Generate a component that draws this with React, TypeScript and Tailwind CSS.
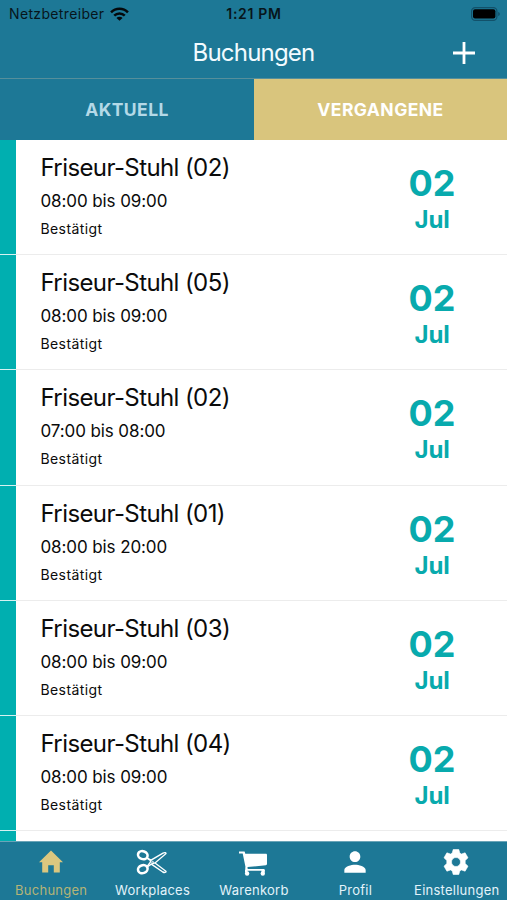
import type { ReactNode } from 'react'

type Booking = {
    id: number
    chair: string
    time: string
    status: string
    day: string
    month: string
}

const bookings: Booking[] = [
    { id: 1, chair: 'Friseur-Stuhl (02)', time: '08:00 bis 09:00', status: 'Bestätigt', day: '02', month: 'Jul' },
    { id: 2, chair: 'Friseur-Stuhl (05)', time: '08:00 bis 09:00', status: 'Bestätigt', day: '02', month: 'Jul' },
    { id: 3, chair: 'Friseur-Stuhl (02)', time: '07:00 bis 08:00', status: 'Bestätigt', day: '02', month: 'Jul' },
    { id: 4, chair: 'Friseur-Stuhl (01)', time: '08:00 bis 20:00', status: 'Bestätigt', day: '02', month: 'Jul' },
    { id: 5, chair: 'Friseur-Stuhl (03)', time: '08:00 bis 09:00', status: 'Bestätigt', day: '02', month: 'Jul' },
    { id: 6, chair: 'Friseur-Stuhl (04)', time: '08:00 bis 09:00', status: 'Bestätigt', day: '02', month: 'Jul' },
]

const WifiIcon = () => (
    <svg width="19" height="14" viewBox="0 0 18 13" fill="none" stroke="#04090c" strokeWidth="2.4">
        <path d="M1 4.900a11.300 11.300 0 0 1 16 0" />
        <path d="M4 8a7.100 7.100 0 0 1 10 0" />
        <path d="M9 13 6.100 10.300a4.100 4.100 0 0 1 5.800 0z" fill="#04090c" stroke="none" />
    </svg>
)

const BatteryIcon = () => (
    <svg width="30" height="14" viewBox="0 0 30 14">
        <rect x="0.6" y="0.6" width="25.3" height="12.8" rx="3.6" fill="none" stroke="#12516a" strokeWidth="1.2" />
        <rect x="2" y="2.2" width="22.4" height="9.4" rx="2" fill="#000" />
        <path d="M27.2 5v4c1-.3 1.6-1.1 1.6-2s-.6-1.7-1.6-2z" fill="#12516a" />
    </svg>
)

const HomeIcon = () => (
    <svg width="32" height="32" viewBox="0 0 32 32" fill="currentColor">
        <path d="M16 4.500 4 16.200h3.200v10.300h6v-7.300h5.600v7.300h6V16.200H28z" />
    </svg>
)

const ScissorsIcon = () => (
    <svg width="34" height="32" viewBox="0 0 34 32" fill="none" stroke="currentColor">
        <ellipse cx="7.800" cy="9.200" rx="4.900" ry="3.900" strokeWidth="2.600" transform="rotate(20 7.800 9.200)" />
        <ellipse cx="7.800" cy="23.200" rx="4.900" ry="3.900" strokeWidth="2.600" transform="rotate(-20 7.800 23.200)" />
        <path d="M12.200 12 16 14.200 28 7.100c1.800-.9 3.300-.4 2.900.6L20 17l-3.700 1.200-4.100 2.600" strokeWidth="1.400" />
        <path d="M12.300 12.300 15.800 14.700 15 16.700l-2.700 3.500" strokeWidth="1.400" />
        <path d="M20 17 31 25.300c.2 1.100-1.600 1.500-3.200.7L16.300 18.200" strokeWidth="1.400" />
        <circle cx="17.600" cy="16.200" r="0.900" strokeWidth="0.900" />
    </svg>
)

const CartIcon = () => (
    <svg width="32" height="32" viewBox="0 0 32 32" fill="currentColor">
        <path d="M2 5.500h5.600l.7 2.200h20.400c.9 0 1.300.4 1.300 1.200v9.100c0 .7-.4 1.100-1.100 1.200L10.500 21.100l.2 2H26.400c.9 0 1.400.4 1.400 1.100v.5H9.400L8.200 24 8.400 20.500 5.700 7.500H2z" />
        <circle cx="10.100" cy="27.500" r="2.200" />
        <circle cx="25.800" cy="27.500" r="2.200" />
        <path d="M8 24h2.500v2.500H8zM24.500 24h3.300v2.500h-3.300z" />
    </svg>
)

const ProfileIcon = () => (
    <svg width="32" height="32" viewBox="0 0 24 24" fill="currentColor">
        <path d="M12 12c2.210 0 4-1.790 4-4s-1.790-4-4-4-4 1.790-4 4 1.790 4 4 4zm0 2c-2.670 0-8 1.340-8 4v2h16v-2c0-2.660-5.330-4-8-4z" />
    </svg>
)

const GearIcon = () => (
    <svg width="32" height="32" viewBox="0 0 32 32" fill="currentColor" fillRule="evenodd">
        <path
            d="M13.200 3.500h5.600l1 3.600 1.600 1 3.700-1.300 2.900 5-2.800 2.700v3l2.800 2.700-2.900 5-3.700-1.300-1.600 1-1 3.600h-5.600l-1-3.600-1.600-1-3.700 1.300-2.900-5 2.800-2.700v-3L4 11.800l2.900-5 3.700 1.300 1.600-1zM16 11.500a4.500 4.500 0 1 0 0 9 4.500 4.500 0 0 0 0-9z"
            stroke="currentColor"
            strokeWidth="0.6"
            strokeLinejoin="round"
        />
    </svg>
)

const BookingRow = ({ booking }: { booking: Booking }) => (
    <li className="flex h-[115.2px]">
        <div className="w-4 shrink-0 border-b border-[#d5f2f2] bg-[#00afb0]" />
        <div className="flex flex-1 border-b border-[#ececec]">
            <div className="flex-1 pl-[24.5px] pt-[12px] text-[#0b0b0b]">
                <h2 className="text-[24px] leading-[32px] tracking-[-0.6px]">{booking.chair}</h2>
                <p className="mt-[5px] text-[17px] leading-[24px] tracking-[-0.1px]">{booking.time}</p>
                <p className="mt-[6px] text-[14px] leading-[20px] tracking-[0.4px]">{booking.status}</p>
            </div>
            <div className="w-[150px] pt-[21px] text-center font-bold text-[#08aaad]">
                <div className="text-[36px] leading-[44px]">{booking.day}</div>
                <div className="text-[24px] leading-[30px] tracking-[-0.2px]">{booking.month}</div>
            </div>
        </div>
    </li>
)

const NavItem = ({ label, active, children }: { label: string; active?: boolean; children: ReactNode }) => (
    <a className={`flex w-[101.4px] flex-col items-center pt-[4px] ${active ? 'text-[#dbc77f]' : 'text-white'}`}>
        {children}
        <span className={`mt-[3px] pl-px text-[13px] leading-[18px] tracking-[0.25px] ${active ? 'text-[#b5b477]' : 'text-[#e3f3fa]'}`}>
            {label}
        </span>
    </a>
)

const App = () => {
    return (
        <div className="flex h-[900px] w-[507px] flex-col overflow-hidden bg-white font-['Inter','Liberation_Sans',sans-serif]">
            <header className="h-[79px] shrink-0 border-b border-[#568f9b] bg-[#1d7896]">
                <div className="grid h-[27px] grid-cols-3 items-center text-[14px] text-[#07151b]">
                    <div className="flex items-center gap-[6px] pl-[9px]">
                        <span className="tracking-[0.35px]">Netzbetreiber</span>
                        <WifiIcon />
                    </div>
                    <span className="pl-px text-center font-semibold tracking-[0.7px]">1:21 PM</span>
                    <div className="flex justify-end pr-[6px]">
                        <BatteryIcon />
                    </div>
                </div>
                <div className="grid h-[51px] grid-cols-[1fr_auto_1fr] items-center">
                    <h1 className="col-start-2 text-[24px] tracking-[-0.8px] text-[#f2fbff]">Buchungen</h1>
                    <button className="mr-[32px] justify-self-end text-white">
                        <svg width="22" height="22" viewBox="0 0 22 22" stroke="currentColor" strokeWidth="2.800">
                            <path d="M11 0v22M0 11h22" />
                        </svg>
                    </button>
                </div>
            </header>

            {/* Tabs */}
            <div className="flex h-[61px] shrink-0 text-[17.5px] font-bold tracking-[0.45px]">
                <button className="w-[254px] bg-[#1d7896] pt-px text-[#b4d9e7]">AKTUELL</button>
                <button className="flex-1 bg-[#d9c57d] pt-px text-white">VERGANGENE</button>
            </div>

            <ul className="min-h-0 flex-1 overflow-hidden">
                {bookings.map((booking) => (
                    <BookingRow key={booking.id} booking={booking} />
                ))}
                <li className="h-[20px]">
                    <div className="h-full w-4 bg-[#00afb0]" />
                </li>
            </ul>

            <nav className="flex h-[59px] shrink-0 border-t border-[#6aa5b8] bg-[#1d7896]">
                <NavItem label="Buchungen" active>
                    <HomeIcon />
                </NavItem>
                <NavItem label="Workplaces">
                    <ScissorsIcon />
                </NavItem>
                <NavItem label="Warenkorb">
                    <CartIcon />
                </NavItem>
                <NavItem label="Profil">
                    <ProfileIcon />
                </NavItem>
                <NavItem label="Einstellungen">
                    <GearIcon />
                </NavItem>
            </nav>
        </div>
    )
}

export default App
